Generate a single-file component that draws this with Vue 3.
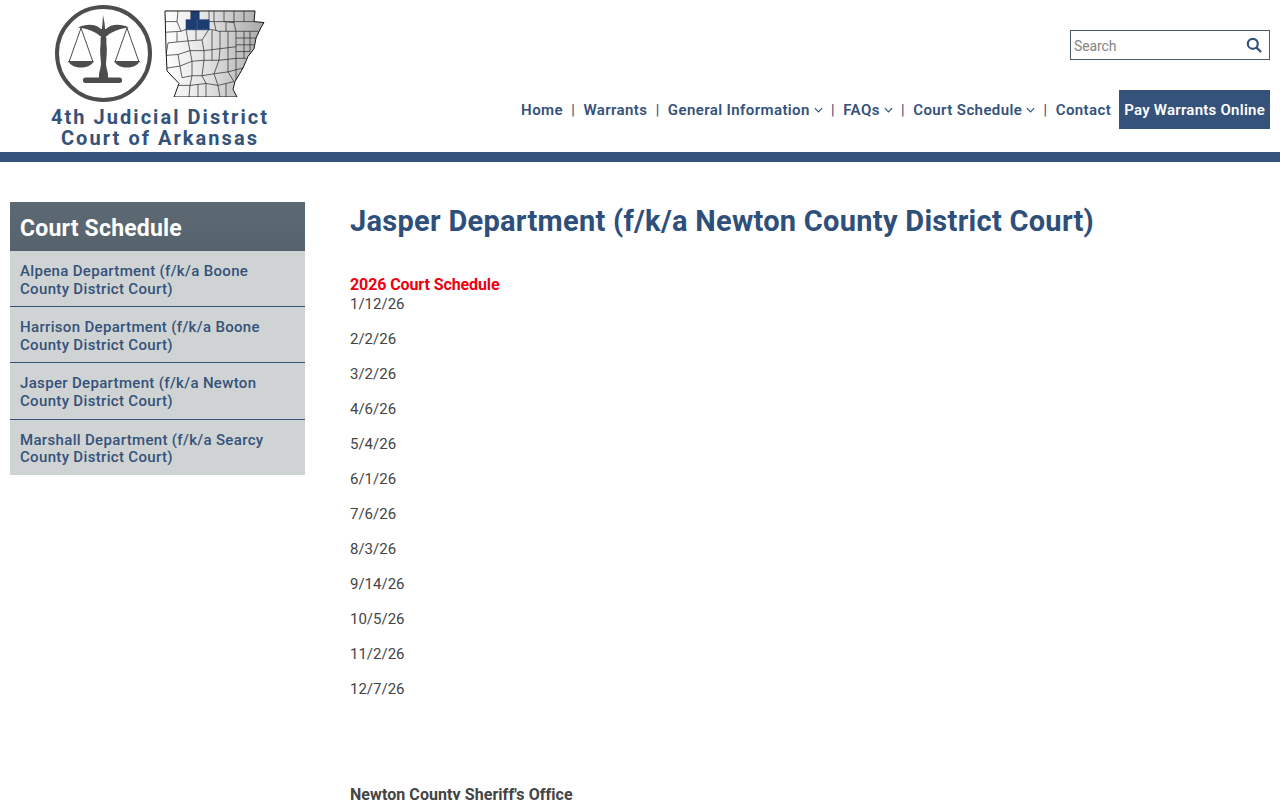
<template>
  <div class="page">
    <header class="site-header">
      <a class="logo" href="#">
        <div class="logo-art">
          <!-- scales -->
          <svg class="scales" viewBox="0 0 100 100" width="100" height="100" aria-hidden="true">
            <circle cx="49.5" cy="49.5" r="46.5" fill="#fff" stroke="#4d4d4d" stroke-width="4" />
            <path d="M49 11 L50.5 19 C51 27 53 34 52.4 40 C53.6 47 52.2 54 52 60 C52.4 65 54 68 54 71 L54 74 L45 74 L45 71 C45 68 46.6 65 47 60 C46.8 54 45.4 47 46.6 40 C46 34 48 27 48.5 19 Z" fill="#4d4d4d" />
            <path d="M24 23.5 C32 19.5 42 19.5 47 25 L52 25 C57 19.5 67 19.5 75 23.5 C67 24.5 58 27 53 32 L46 32 C41 27 32 24.5 24 23.5 Z" fill="#4d4d4d" />
            <rect x="29" y="73.5" width="39" height="5.5" rx="2.5" fill="#4d4d4d" />
            <path d="M27 24 L15 58 M27 24 L39 58 M73 24 L61 58 M73 24 L85 58" stroke="#4d4d4d" stroke-width="1" fill="none" />
            <path d="M14 57 L40 57 C37 62 32 63.5 27 63.5 C22 63.5 17 62 14 57 Z M60 57 L86 57 C83 62 78 63.5 73 63.5 C68 63.5 63 62 60 57 Z" fill="#4d4d4d" />
          </svg>
          <!-- arkansas county map -->
          <svg class="county-map" viewBox="0 0 102 90" width="102" height="87" preserveAspectRatio="none" aria-hidden="true">
            <defs>
              <linearGradient id="mapFill" x1="0" x2="1" y1="0" y2="0">
                <stop offset="0" stop-color="#ffffff" />
                <stop offset="0.45" stop-color="#e0e0e0" />
                <stop offset="1" stop-color="#a8a8a8" />
              </linearGradient>
              <clipPath id="mapClip">
                <path :d="outline" />
              </clipPath>
            </defs>
            <path :d="outline" fill="url(#mapFill)" />
            <g clip-path="url(#mapClip)">
              <path :d="counties" fill="none" stroke="#2e2e2e" stroke-width="0.75" />
              <path d="M27 0 H35 V10 H45 V20.5 H22 V10 H27 Z" fill="#1c3d73" stroke="#1c3d73" stroke-width="0.6" />
              <path d="M33 10 V20" stroke="#5b7398" stroke-width="0.5" />
            </g>
            <path :d="outline" fill="none" stroke="#111" stroke-width="1" />
          </svg>
        </div>
        <div class="logo-text">
          <span>4th Judicial District</span>
          <span>Court of Arkansas</span>
        </div>
      </a>
      <div class="header-right">
        <form class="search" @submit.prevent>
          <input type="text" placeholder="Search" />
          <button type="submit" aria-label="Search">
            <svg viewBox="0 0 16 16" width="16" height="16" fill="none" stroke="#34527a" stroke-width="2.2" stroke-linecap="round">
              <circle cx="6.8" cy="6.8" r="5" />
              <path d="M10.6 10.6 L14.4 14.4" />
            </svg>
          </button>
        </form>
        <nav class="main-nav">
          <template v-for="(item, i) in nav" :key="item.label">
            <span v-if="i > 0" class="sep">|</span>
            <a href="#" class="nav-link">
              {{ item.label }}
              <svg v-if="item.sub" viewBox="0 0 10 6" width="9" height="6" fill="none" stroke="#34527a" stroke-width="1.3">
                <path d="M1 1 L5 5 L9 1" />
              </svg>
            </a>
          </template>
          <a href="#" class="pay-btn">Pay Warrants Online</a>
        </nav>
      </div>
    </header>

    <div class="content">
      <aside class="sidebar">
        <h2>Court Schedule</h2>
        <a v-for="d in departments" :key="d[0]" href="#" class="side-link">{{ d[0] }}<br />{{ d[1] }}</a>
      </aside>
      <main class="main">
        <h1>Jasper Department (f/k/a Newton County District Court)</h1>
        <div class="schedule-title">2026 Court Schedule</div>
        <p v-for="date in dates" :key="date">{{ date }}</p>
        <div class="sheriff">Newton County Sheriff's Office</div>
      </main>
    </div>
  </div>
</template>

<script setup>
const nav = [
  { label: 'Home' },
  { label: 'Warrants' },
  { label: 'General Information', sub: true },
  { label: 'FAQs', sub: true },
  { label: 'Court Schedule', sub: true },
  { label: 'Contact' }
]

const departments = [
  ['Alpena Department (f/k/a Boone', 'County District Court)'],
  ['Harrison Department (f/k/a Boone', 'County District Court)'],
  ['Jasper Department (f/k/a Newton', 'County District Court)'],
  ['Marshall Department (f/k/a Searcy', 'County District Court)']
]

const dates = ['1/12/26', '2/2/26', '3/2/26', '4/6/26', '5/4/26', '6/1/26', '7/6/26', '8/3/26', '9/14/26', '10/5/26', '11/2/26', '12/7/26']

const outline = 'M1 1 L91 1 L90 12 L100 13 L97 18 L92 29 L90 40 L84 48 L79 60 L71 74 L69 82 L73 90 L10 90 L15 76 L3 63 L2 40 Z'

// county borders, traced roughly by eye
const counties =
  'M1 12 L13 12 L14 1 M13 12 L17 22 L2 23 M17 22 L22 20 M27 1 V10 M35 1 V10 M45 1 V20 M50 1 V12 M60 1 V12 L45 12 M50 12 L52 21 L45 20 M60 12 L70 13 L70 1 M80 1 L80 12 ' +
  'M90 12 L60 12 M70 13 L72 22 L54 22 L52 21 M62 13 L62 22 M72 22 L94 22 M72 29 H92 M72 36 H90 M72 43 H86 M72 50 H82 M72 22 V60 M80 22 V50 M86 22 V43 ' +
  'M22 20 L24 32 L4 34 L2 47 M13 23 L13 33 M24 32 L38 31 L45 20 M32 20 L32 31 M38 31 L40 42 L26 42 L24 32 M40 42 L56 40 L56 22 M48 21 L48 41 M56 40 L72 38 M64 22 L64 39 ' +
  'M2 47 L14 46 L26 42 M14 46 L16 58 L3 60 M26 42 L28 53 L16 58 M28 53 L40 52 L40 42 M40 52 L55 52 L56 40 M48 41 L48 52 M55 52 L72 50 M64 39 L64 64 ' +
  'M16 58 L18 70 L28 68 L28 53 M28 68 L38 68 L40 52 M38 68 L50 66 L55 52 M50 66 L64 64 M64 64 L79 60 M72 60 L72 74 ' +
  'M12 78 L26 78 L28 68 M26 78 L25 90 M26 78 L42 76 L38 68 M34 77 L34 90 M42 76 L42 90 M42 76 L54 78 L50 66 M54 78 L56 90 M54 78 L70 74 L64 64 M62 76 L62 90'
</script>

<style scoped>
.page {
  font-family: Roboto, 'Liberation Sans', sans-serif;
  color: #444;
}

.site-header {
  display: flex;
  justify-content: space-between;
  height: 152px;
  padding: 0 10px 0 50px;
  border-bottom: 10px solid #34527a;
}

.logo {
  display: block;
  width: 220px;
  text-decoration: none;
}

.logo-art {
  display: flex;
  align-items: flex-start;
  gap: 10px;
  height: 107px;
  padding: 4px 0 0 4px;
  box-sizing: border-box;
}

.scales {
  flex-shrink: 0;
}

.county-map {
  flex-shrink: 0;
  margin-top: 6px;
}

.logo-text {
  display: flex;
  flex-direction: column;
  align-items: center;
  font-size: 20px;
  line-height: 20.5px;
  font-weight: 700;
  letter-spacing: 2.05px;
  color: #34527a;
  white-space: nowrap;
}

.header-right {
  display: flex;
  flex-direction: column;
  align-items: flex-end;
  padding-top: 30px;
}

.search {
  display: flex;
  align-items: center;
  width: 200px;
  height: 30px;
  box-sizing: border-box;
  border: 1px solid #4d5a63;
  background: #fff;
}

.search input {
  flex: 1;
  min-width: 0;
  border: 0;
  outline: 0;
  padding: 2px 3px 0;
  font: 400 14px Roboto, sans-serif;
  letter-spacing: -0.1px;
  color: #333;
}

.search input::placeholder {
  color: #858585;
}

.search button {
  display: flex;
  border: 0;
  padding: 0 7px 0 0;
  background: none;
}

.main-nav {
  display: flex;
  align-items: center;
  height: 39px;
  margin-top: 30px;
  font-size: 15px;
  font-weight: 600;
  letter-spacing: 0.4px;
  color: #34527a;
  white-space: nowrap;
}

.nav-link {
  display: flex;
  align-items: center;
  gap: 4px;
  padding-top: 1px;
  color: #34527a;
  text-decoration: none;
}

.sep {
  margin: 0 8.3px;
  font-weight: 500;
  font-size: 14px;
}

.pay-btn {
  display: flex;
  align-items: center;
  height: 39px;
  margin-left: 8px;
  padding: 1px 5px 0;
  box-sizing: border-box;
  background: #34527a;
  color: #fff;
  letter-spacing: 0.25px;
  text-decoration: none;
}

.content {
  display: flex;
  padding: 40px 10px 0;
}

.sidebar {
  flex-shrink: 0;
  align-self: flex-start;
  width: 295px;
}

.sidebar h2 {
  margin: 0;
  height: 49px;
  padding: 0 10px;
  background: linear-gradient(#5d6a73, #56626c);
  color: #fff;
  font-size: 23px;
  font-weight: 700;
  line-height: 53px;
  letter-spacing: 0.2px;
}

.side-link {
  display: block;
  padding: 12px 10px 8px;
  background: #d0d3d4;
  border-bottom: 1px solid #34527a;
  color: #34527a;
  font-size: 15px;
  font-weight: 500;
  line-height: 17.6px;
  letter-spacing: 0.33px;
  text-decoration: none;
}

.side-link:last-child {
  border-bottom: 0;
}

.main {
  flex: 1;
  min-width: 0;
  padding-left: 45px;
}

.main h1 {
  margin: 0 0 36px;
  padding-top: 2px;
  color: #2f4f7b;
  font-size: 29px;
  font-weight: 700;
  line-height: 35px;
  letter-spacing: 0.28px;
}

.schedule-title {
  color: #ee0011;
  font-size: 16px;
  font-weight: 700;
  line-height: 20px;
  letter-spacing: -0.1px;
}

.main p {
  margin: 0 0 16px;
  font-size: 15px;
  font-weight: 400;
  line-height: 19px;
}

.sheriff {
  margin-top: 86px;
  font-size: 16px;
  font-weight: 700;
  line-height: 19px;
  letter-spacing: 0.07px;
}
</style>

<style>
html, body {
  margin: 0;
  background: #fff;
}
</style>
